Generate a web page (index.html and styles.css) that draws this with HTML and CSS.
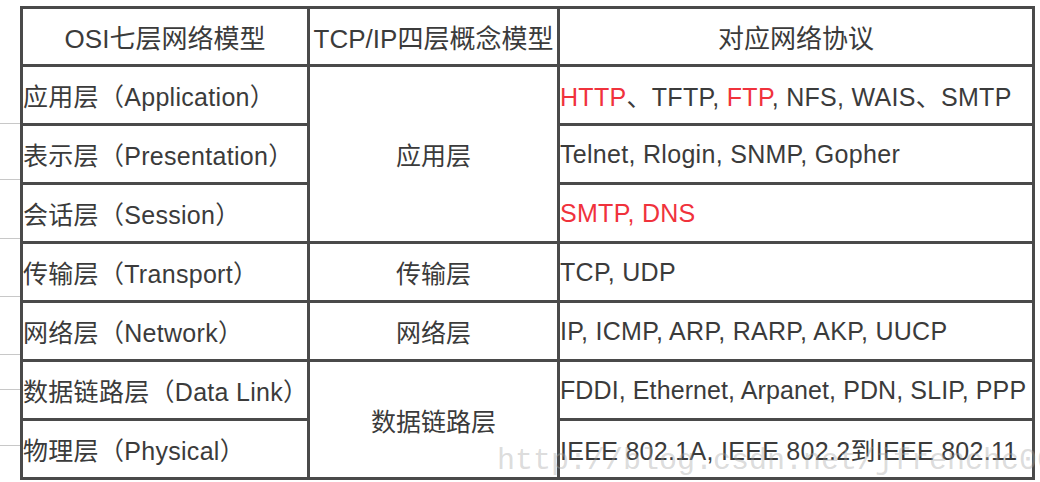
FILE: index.html
```html
<!DOCTYPE html>
<html lang="zh">
<head>
<meta charset="utf-8">
<link rel="stylesheet" href="styles.css">
</head>
<body>
<div class="page">
  <div class="marks">
    <span class="mark m1"></span>
    <span class="mark m2"></span>
    <span class="mark m3"></span>
    <span class="mark m4"></span>
    <span class="mark m5"></span>
    <span class="mark m6"></span>
    <span class="mark m7"></span>
  </div>
  <table class="osi">
    <colgroup>
      <col class="c1"><col class="c2"><col class="c3">
    </colgroup>
    <thead>
      <tr class="head">
        <th>OSI七层网络模型</th>
        <th>TCP/IP四层概念模型</th>
        <th>对应网络协议</th>
      </tr>
    </thead>
    <tbody>
      <tr>
        <td>应用层（Application）</td>
        <td class="mid" rowspan="3">应用层</td>
        <td><span class="red">HTTP</span>、TFTP, <span class="red">FTP</span>, NFS, WAIS、SMTP</td>
      </tr>
      <tr>
        <td>表示层（Presentation）</td>
        <td>Telnet, Rlogin, SNMP, Gopher</td>
      </tr>
      <tr>
        <td>会话层（Session）</td>
        <td><span class="red">SMTP, DNS</span></td>
      </tr>
      <tr>
        <td>传输层（Transport）</td>
        <td class="mid">传输层</td>
        <td>TCP, UDP</td>
      </tr>
      <tr>
        <td>网络层（Network）</td>
        <td class="mid">网络层</td>
        <td>IP, ICMP, ARP, RARP, AKP, UUCP</td>
      </tr>
      <tr>
        <td>数据链路层（Data Link）</td>
        <td class="mid" rowspan="2">数据链路层</td>
        <td class="tight">FDDI, Ethernet, Arpanet, PDN, SLIP, PPP</td>
      </tr>
      <tr>
        <td>物理层（Physical）</td>
        <td>IEEE 802.1A, IEEE 802.2到IEEE 802.11</td>
      </tr>
    </tbody>
  </table>
  <div class="watermark">http://blog.csdn.net/jfrenchc00</div>
</div>
</body>
</html>
```

FILE: styles.css
```css
html, body {
  margin: 0;
  padding: 0;
  background: #ffffff;
  overflow: hidden;
}

.page {
  position: relative;
  width: 1040px;
  height: 482px;
  padding: 6px 0 0 20px;
  box-sizing: border-box;
  overflow: hidden;
  font-family: "Liberation Sans", "Noto Sans CJK SC", sans-serif;
  color: #3b3b3b;
}

.osi {
  border-collapse: collapse;
  table-layout: fixed;
  width: 1012px;
  position: relative;
  z-index: 1;
}

.c1 { width: 287px; }
.c2 { width: 250px; }
.c3 { width: 475px; }

.osi th,
.osi td {
  border: 3px solid #4a4a4a;
  padding: 0;
  height: 56px;
  font-size: 25px;
  font-weight: normal;
  letter-spacing: 0.3px;
  white-space: nowrap;
  overflow: hidden;
  text-align: left;
  vertical-align: middle;
}

.osi td.tight {
  letter-spacing: 0.1px;
}

.osi .head th {
  height: 55px;
  text-align: center;
  font-size: 26px;
  letter-spacing: 0;
}

.osi td.mid {
  text-align: center;
  letter-spacing: 0;
}

.red {
  color: #f0323c;
}

.marks {
  position: absolute;
  left: 0;
  top: 0;
}

.mark {
  position: absolute;
  left: 0;
  width: 20px;
  height: 1px;
  background: #c8c8c8;
}

.m1 { top: 123px; }
.m2 { top: 179px; }
.m3 { top: 238px; }
.m4 { top: 296px; }
.m5 { top: 354px; }
.m6 { top: 389px; }
.m7 { top: 445px; }

.watermark {
  position: absolute;
  left: 497px;
  top: 444px;
  z-index: 2;
  font-family: "Liberation Mono", monospace;
  font-size: 30px;
  color: rgba(165, 165, 165, 0.4);
  white-space: nowrap;
}
```
